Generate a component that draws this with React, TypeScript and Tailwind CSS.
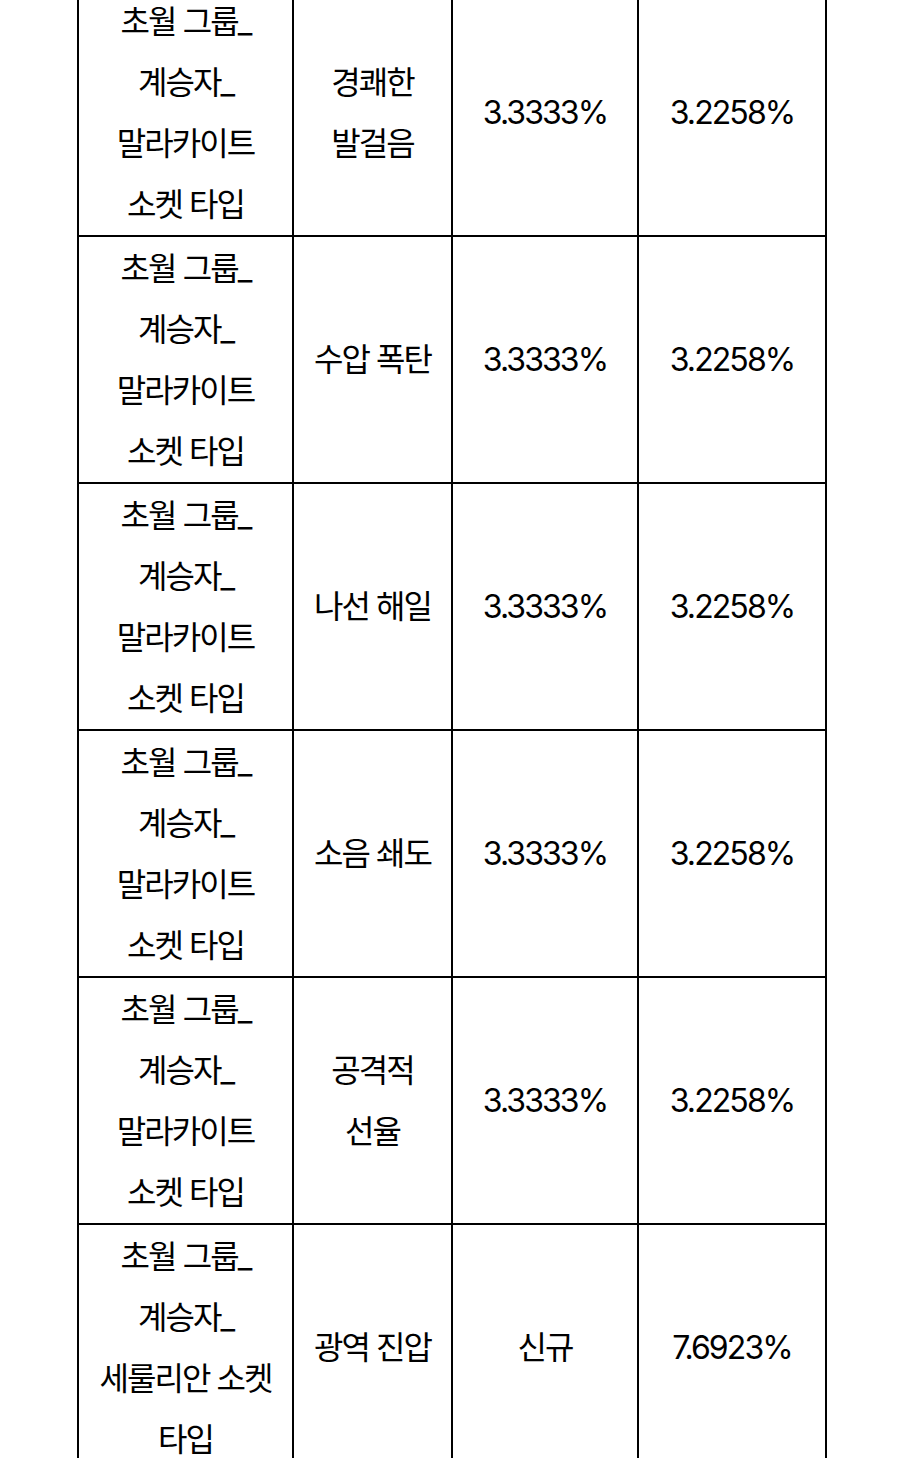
import React from "react";

type Row = { a: string[]; b: string[]; c: string; d: string };

const rows: Row[] = [
  { a: ["초월 그룹_", "계승자_", "말라카이트", "소켓 타입"], b: ["경쾌한", "발걸음"], c: "3.3333%", d: "3.2258%" },
  { a: ["초월 그룹_", "계승자_", "말라카이트", "소켓 타입"], b: ["수압 폭탄"], c: "3.3333%", d: "3.2258%" },
  { a: ["초월 그룹_", "계승자_", "말라카이트", "소켓 타입"], b: ["나선 해일"], c: "3.3333%", d: "3.2258%" },
  { a: ["초월 그룹_", "계승자_", "말라카이트", "소켓 타입"], b: ["소음 쇄도"], c: "3.3333%", d: "3.2258%" },
  { a: ["초월 그룹_", "계승자_", "말라카이트", "소켓 타입"], b: ["공격적", "선율"], c: "3.3333%", d: "3.2258%" },
  { a: ["초월 그룹_", "계승자_", "세룰리안 소켓", "타입"], b: ["광역 진압"], c: "신규", d: "7.6923%" },
];

function Lines({ lines }: { lines: string[] }) {
  return (
    <>
      {lines.map((l, i) => (
        <div key={i}>{l}</div>
      ))}
    </>
  );
}

export default function App() {
  return (
    <div
      className="w-[900px] h-[1458px] overflow-hidden bg-white text-black"
      style={{ fontFamily: '"Inter", "Noto Sans CJK KR", sans-serif' }}
    >
      <table className="table-fixed border-collapse ml-[77px] -mt-[12px] text-[32px] leading-[61px] tracking-[-0.06em]">
        <colgroup>
          <col className="w-[215px]" />
          <col className="w-[159px]" />
          <col className="w-[186px]" />
          <col className="w-[188px]" />
        </colgroup>
        <tbody>
          {rows.map((r, i) => (
            <tr key={i}>
              <td className="border-2 border-black text-center align-middle h-[247px] p-0">
                <Lines lines={r.a} />
              </td>
              <td className="border-2 border-black text-center align-middle p-0">
                <Lines lines={r.b} />
              </td>
              <td className="border-2 border-black text-center align-middle p-0">{r.c}</td>
              <td className="border-2 border-black text-center align-middle p-0">{r.d}</td>
            </tr>
          ))}
        </tbody>
      </table>
    </div>
  );
}
